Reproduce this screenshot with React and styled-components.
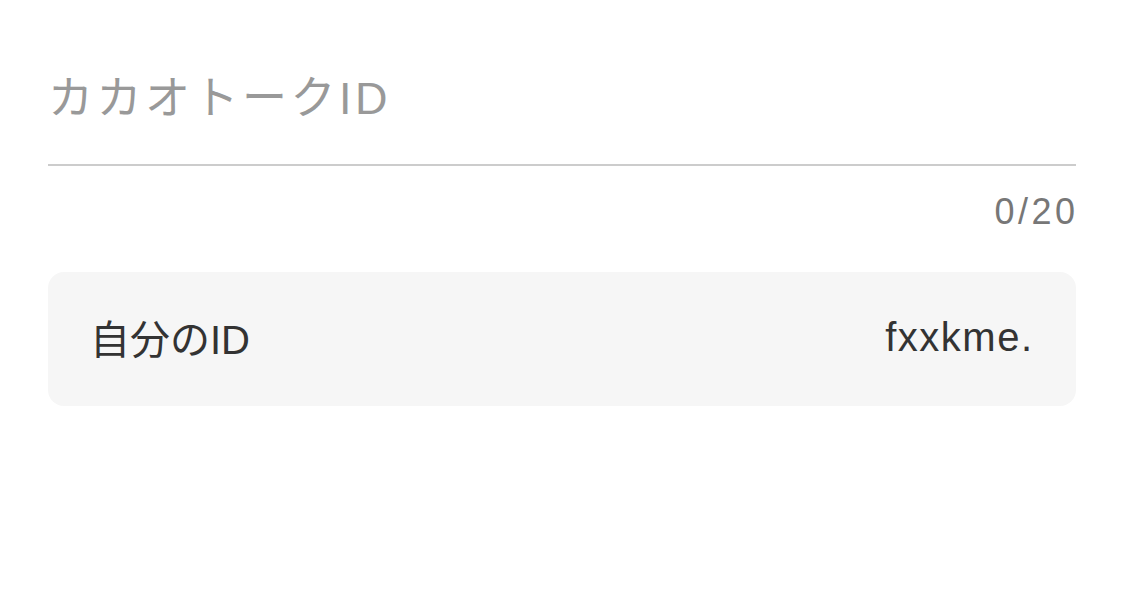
import React, { useState } from 'react';
import styled, { createGlobalStyle } from 'styled-components';

const GlobalStyle = createGlobalStyle`
  html, body {
    margin: 0;
    padding: 0;
    background: #ffffff;
  }
  body {
    font-family: "Liberation Sans", "Noto Sans CJK JP", sans-serif;
  }
`;

const Page = styled.div`
  padding: 50px 49px 0 48px;
  display: flex;
  flex-direction: column;
`;

const Field = styled.input`
  display: block;
  width: 100%;
  box-sizing: border-box;
  height: 116px;
  padding: 0 0 16px;
  border: none;
  border-bottom: 2px solid #cccccc;
  outline: none;
  background: transparent;
  font-family: "Liberation Sans", "Noto Sans CJK JP", sans-serif;
  font-size: 45px;
  color: #333;

  &::placeholder {
    color: #999999;
    letter-spacing: 3.5px;
  }
`;

const Counter = styled.div`
  align-self: flex-end;
  margin-top: 24px;
  margin-right: -2.5px;
  font-size: 36px;
  line-height: 44px;
  color: #777777;
  letter-spacing: 3.5px;
`;

const Card = styled.div`
  margin-top: 38px;
  height: 134px;
  box-sizing: border-box;
  padding: 0 44px 0 42px;
  background: #f6f6f6;
  border-radius: 16px;
  display: flex;
  align-items: center;
  justify-content: space-between;
`;

const CardLabel = styled.span`
  font-family: "Liberation Sans", "Noto Sans CJK JP", sans-serif;
  font-size: 40px;
  color: #333333;
  margin-top: -4px;
`;

const CardValue = styled.span`
  font-size: 40px;
  color: #333333;
  letter-spacing: 1.5px;
  margin-right: -1.5px;
  margin-top: -4px;
`;

export default function App() {
  const [value, setValue] = useState('');
  return (
    <>
      <GlobalStyle />
      <Page>
        <Field
          value={value}
          maxLength={20}
          placeholder="カカオトークID"
          onChange={e => setValue(e.target.value)}
        />
        <Counter>{value.length}/20</Counter>
        <Card>
          <CardLabel>自分のID</CardLabel>
          <CardValue>fxxkme.</CardValue>
        </Card>
      </Page>
    </>
  );
}
